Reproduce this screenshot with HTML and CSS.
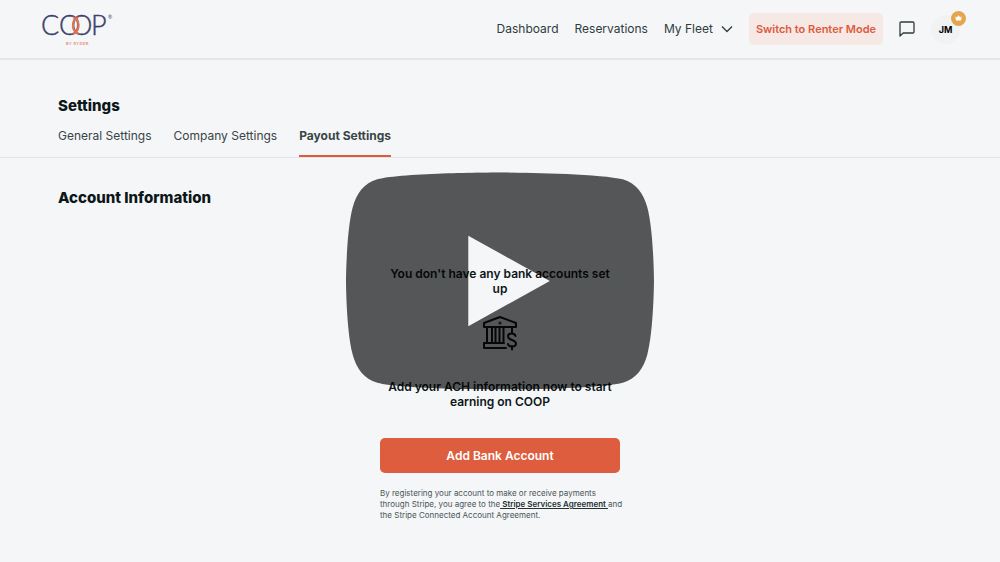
FILE: index.html
```html
<!DOCTYPE html>
<html lang="en">
<head>
<meta charset="utf-8">
<meta name="viewport" content="width=device-width, initial-scale=1">
<title>Payout Settings</title>
<link rel="stylesheet" href="styles.css">
</head>
<body>
<header class="header">
  <a class="logo" href="#">
    <svg width="76" height="44" viewBox="0 -6 76 44" role="img" aria-label="COOP by Ryder">
      <text class="logo-word" x="1 19 31 51" y="22">COOP</text>
      <g class="logo-link">
        <path d="M33 4.2A9 9 0 0 1 33 20.8"/>
        <path d="M38.500 4.200A9 9 0 0 0 38.500 20.800"/>
      </g>
      <text class="logo-mark" x="68" y="6">®</text>
      <text class="logo-sub" x="26" y="32">BY RYDER</text>
    </svg>
  </a>
  <nav class="nav">
    <a href="#">Dashboard</a>
    <a href="#">Reservations</a>
    <a class="nav-menu" href="#">My Fleet
      <svg width="12" height="8" viewBox="0 0 12 8"><path d="M1 1.5 6 6.5 11 1.5"/></svg>
    </a>
  </nav>
  <button class="mode" type="button">Switch to Renter Mode</button>
  <button class="chat" type="button" aria-label="Messages">
    <svg width="16" height="16" viewBox="0 0 16 16"><path d="M2.2 1H13.8Q15 1 15 2.2V10.8Q15 12 13.8 12H4.2L1 15V2.2Q1 1 2.2 1Z"/></svg>
  </button>
  <button class="avatar" type="button">JM
    <span class="badge"><svg width="7" height="6" viewBox="0 0 7 6"><path d="M.3 1.2 1.8 2.4 3.5.3 5.2 2.4 6.7 1.2 6.1 5.5H.9Z"/></svg></span>
  </button>
</header>
<main>
  <div class="settings">
    <h1>Settings</h1>
    <nav class="tabs">
      <a href="#">General Settings</a>
      <a href="#">Company Settings</a>
      <a class="active" href="#" aria-current="page">Payout Settings</a>
    </nav>
  </div>
  <section class="account">
    <h2>Account Information</h2>
    <div class="empty">
      <p class="lead">You don't have any bank accounts set up</p>
      <svg class="bank" width="36" height="36" viewBox="0 0 36 36">
        <path d="M2 12V8L18 2 34 8V12H2ZM5 12V28M10 12V28M13.500 12V28M17.500 12V28M21.500 12V28M30 12V15M24 33H2V28H22"/>
        <path d="M33.500 21C32.500 17.500 26 17.500 26 21.500 26 25.500 34 24.500 34 28.500 34 32.500 26.500 32.500 26 29M30 16V18.500M30 31V34.500"/>
        <circle cx="18" cy="8" r=".5"/>
      </svg>
      <p class="lead">Add your ACH information now to start earning on COOP</p>
      <button class="primary" type="button">Add Bank Account</button>
      <p class="terms">By registering your account to make or receive payments<br>through Stripe, you agree to the<a href="#"> Stripe Services Agreement </a>and<br>the Stripe Connected Account Agreement.</p>
    </div>
  </section>
</main>
<button class="play" type="button" aria-label="Play video">
  <svg viewBox="0 0 68 48"><path fill-rule="evenodd" d="M66.52 7.74C65.74 4.81 64.03 2.33 61.1 1.55 55.79.13 34 0 34 0S12.210.13 6.900 1.55C3.970 2.33 2.270 4.81 1.480 7.74.06 13.05 0 24 0 24S.06 34.950 1.480 40.260C2.260 43.190 3.970 45.670 6.900 46.450 12.210 47.870 34 48 34 48S55.790 47.870 61.100 46.450C64.030 45.670 65.740 43.190 66.520 40.260 67.940 34.950 68 24 68 24S67.940 13.050 66.520 7.740ZM45 24 27 14V34Z"/></svg>
</button>
</body>
</html>
```
FILE: styles.css
```css
* {
  box-sizing: border-box;
}

body {
  margin: 0;
  min-height: 100vh;
  position: relative;
  background: #f4f6f8;
  color: #0d1719;
  font-family: Inter, "Open Sans", sans-serif;
}

h1, h2, p {
  margin: 0;
}

a {
  color: inherit;
  text-decoration: none;
}

button {
  border: 0;
  padding: 0;
  background: none;
  color: inherit;
  font: inherit;
  cursor: pointer;
}

svg {
  display: block;
}

.header {
  display: flex;
  align-items: center;
  gap: 16px;
  height: 60px;
  padding: 0 40px;
  border-bottom: 2px solid #e4e6e8;
}

.logo {
  margin-right: auto;
}

.logo-word {
  font: 300 27px Lato, sans-serif;
  fill: #3b4069;
  stroke: #3b4069;
  stroke-width: 0.4;
}

.logo-link {
  fill: none;
  stroke: #e56f50;
  stroke-width: 2;
}

.logo-mark {
  font: 5px Lato, sans-serif;
  fill: #3b4069;
}

.logo-sub {
  font: 700 4px Lato, sans-serif;
  letter-spacing: 0.5px;
  fill: #e98a72;
}

.nav {
  display: flex;
  gap: 16px;
  color: #303b3d;
  font-size: 12px;
  line-height: 20px;
}

.nav-menu {
  display: flex;
  align-items: center;
  gap: 8px;
}

.nav-menu svg,
.chat svg {
  fill: none;
  stroke: #303b3d;
  stroke-width: 1.3;
  stroke-linejoin: round;
}

.mode {
  padding: 0 7px;
  border-radius: 5px;
  background: #f6e8e5;
  color: #dd5b3c;
  font-size: 11px;
  font-weight: 600;
  line-height: 32px;
}

.avatar {
  position: relative;
  width: 29px;
  height: 29px;
  border-radius: 50%;
  background: #f0f2f3;
  color: #000;
  font-size: 9px;
  font-weight: 700;
}

.badge {
  position: absolute;
  top: -4px;
  right: -6px;
  display: grid;
  place-items: center;
  width: 15px;
  height: 15px;
  border-radius: 50%;
  background: #e5a54c;
}

.badge svg {
  fill: #fff;
}

.settings {
  padding: 36px 58px 0;
  border-bottom: 1px solid #e1e4e6;
}

h1, h2 {
  font-size: 15px;
  font-weight: 800;
  line-height: 20px;
}

.tabs {
  display: flex;
  gap: 22px;
  margin-top: 10px;
  color: #3a4446;
  font-size: 12px;
  line-height: 20px;
}

.tabs a {
  padding-bottom: 9px;
  border-bottom: 2px solid transparent;
}

.tabs .active {
  border-color: #dd5b3c;
  font-weight: 700;
}

.account {
  padding: 30px 58px;
}

.empty {
  display: flex;
  flex-direction: column;
  align-items: center;
  max-width: 240px;
  margin: 58px auto 0;
}

.lead {
  max-width: 232px;
  font-size: 12px;
  font-weight: 600;
  line-height: 15px;
  text-align: center;
}

.bank {
  margin: 19px 0 28px;
  fill: none;
  stroke: #0d1719;
  stroke-width: 2;
  stroke-linejoin: round;
  stroke-linecap: round;
}

.primary {
  width: 100%;
  margin-top: 29px;
  border-radius: 5px;
  background: #dd5d3e;
  color: #fff;
  font-size: 12px;
  font-weight: 600;
  line-height: 35px;
}

.terms {
  align-self: flex-start;
  margin-top: 15px;
  color: #4b5557;
  font-size: 8px;
  line-height: 11px;
  white-space: nowrap;
}

.terms a {
  color: #253032;
  font-weight: 600;
  text-decoration: underline;
}

.play {
  position: absolute;
  top: 50%;
  left: 50%;
  width: 308px;
  transform: translate(-50%, -50%);
}

.play svg {
  width: 100%;
  fill: rgba(0, 0, 0, 0.65);
}
```
